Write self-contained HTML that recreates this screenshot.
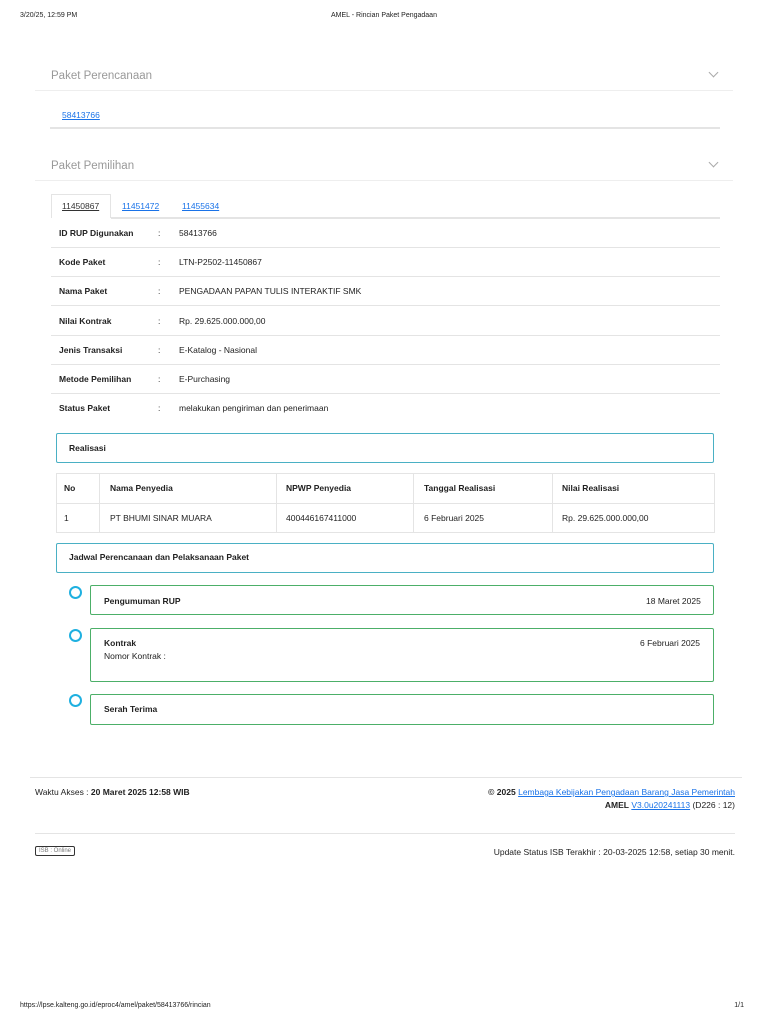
<!DOCTYPE html>
<html><head><meta charset="utf-8"><style>
*{margin:0;padding:0;box-sizing:border-box}
body{width:768px;height:1024px;background:#fff;font-family:"Liberation Sans",sans-serif;font-size:8.5px;color:#222;position:relative;overflow:hidden}
.a{position:absolute;white-space:nowrap}
.hl{position:absolute;height:1px;background:#e4e4e4}
a{color:#1a73e8;text-decoration:underline}
.b{font-weight:bold}
.box{position:absolute;border:1px solid #4ab0c4;border-radius:2px}
.gbox{position:absolute;border:1px solid #4caf68;border-radius:2px}
.circ{position:absolute;width:13px;height:13px;border:2px solid #1fb0e0;border-radius:50%}
.chev{position:absolute;width:7px;height:7px;border-right:1px solid #aaa;border-bottom:1px solid #aaa;transform:rotate(45deg)}
</style></head><body>
<div class="a" style="left:20px;top:12px;font-size:7px">3/20/25, 12:59 PM</div>
<div class="a" style="left:0;width:768px;text-align:center;top:12px;font-size:7px">AMEL - Rincian Paket Pengadaan</div>

<div class="a" style="left:51px;top:70px;font-size:11.5px;color:#999">Paket Perencanaan</div>
<div class="chev" style="left:710px;top:69px"></div>
<div class="hl" style="left:35px;width:698px;top:90px;background:#eee"></div>
<div class="a" style="left:62px;top:110px"><a>58413766</a></div>
<div class="hl" style="left:50px;width:670px;top:127px;height:1.5px"></div>

<div class="a" style="left:51px;top:160px;font-size:11.5px;color:#999">Paket Pemilihan</div>
<div class="chev" style="left:710px;top:159px"></div>
<div class="hl" style="left:35px;width:698px;top:180px;background:#eee"></div>

<div style="position:absolute;left:51px;top:194px;width:60px;height:24px;border:1px solid #e4e4e4;border-bottom:none;background:#fff"></div>
<div class="a" style="left:62px;top:201px;color:#333;text-decoration:underline">11450867</div>
<div class="a" style="left:122px;top:201px"><a>11451472</a></div>
<div class="a" style="left:182px;top:201px"><a>11455634</a></div>
<div class="hl" style="left:111px;width:609px;top:217px;height:1.5px"></div>

<div class="a b" style="left:59px;top:228px">ID RUP Digunakan</div><div class="a" style="left:158px;top:228px">:</div><div class="a" style="left:179px;top:228px">58413766</div>
<div class="hl" style="left:51px;width:669px;top:247px"></div>
<div class="a b" style="left:59px;top:257px">Kode Paket</div><div class="a" style="left:158px;top:257px">:</div><div class="a" style="left:179px;top:257px">LTN-P2502-11450867</div>
<div class="hl" style="left:51px;width:669px;top:276px"></div>
<div class="a b" style="left:59px;top:286px">Nama Paket</div><div class="a" style="left:158px;top:286px">:</div><div class="a" style="left:179px;top:286px">PENGADAAN PAPAN TULIS INTERAKTIF SMK</div>
<div class="hl" style="left:51px;width:669px;top:305px"></div>
<div class="a b" style="left:59px;top:316px">Nilai Kontrak</div><div class="a" style="left:158px;top:316px">:</div><div class="a" style="left:179px;top:316px">Rp. 29.625.000.000,00</div>
<div class="hl" style="left:51px;width:669px;top:335px"></div>
<div class="a b" style="left:59px;top:345px">Jenis Transaksi</div><div class="a" style="left:158px;top:345px">:</div><div class="a" style="left:179px;top:345px">E-Katalog - Nasional</div>
<div class="hl" style="left:51px;width:669px;top:364px"></div>
<div class="a b" style="left:59px;top:374px">Metode Pemilihan</div><div class="a" style="left:158px;top:374px">:</div><div class="a" style="left:179px;top:374px">E-Purchasing</div>
<div class="hl" style="left:51px;width:669px;top:393px"></div>
<div class="a b" style="left:59px;top:403px">Status Paket</div><div class="a" style="left:158px;top:403px">:</div><div class="a" style="left:179px;top:403px">melakukan pengiriman dan penerimaan</div>

<div class="box" style="left:56px;top:433px;width:658px;height:30px"></div>
<div class="a b" style="left:69px;top:443px">Realisasi</div>

<div style="position:absolute;left:56px;top:473px;width:659px;height:60px;border:1px solid #e4e4e4"></div>
<div class="hl" style="left:56px;width:659px;top:503px"></div>
<div style="position:absolute;left:99px;top:473px;width:1px;height:60px;background:#e4e4e4"></div>
<div style="position:absolute;left:276px;top:473px;width:1px;height:60px;background:#e4e4e4"></div>
<div style="position:absolute;left:413px;top:473px;width:1px;height:60px;background:#e4e4e4"></div>
<div style="position:absolute;left:552px;top:473px;width:1px;height:60px;background:#e4e4e4"></div>
<div class="a b" style="left:64px;top:483px">No</div>
<div class="a b" style="left:110px;top:483px">Nama Penyedia</div>
<div class="a b" style="left:286px;top:483px">NPWP Penyedia</div>
<div class="a b" style="left:424px;top:483px">Tanggal Realisasi</div>
<div class="a b" style="left:562px;top:483px">Nilai Realisasi</div>
<div class="a" style="left:64px;top:513px">1</div>
<div class="a" style="left:110px;top:513px">PT BHUMI SINAR MUARA</div>
<div class="a" style="left:286px;top:513px">400446167411000</div>
<div class="a" style="left:424px;top:513px">6 Februari 2025</div>
<div class="a" style="left:562px;top:513px">Rp. 29.625.000.000,00</div>

<div class="box" style="left:56px;top:543px;width:658px;height:30px"></div>
<div class="a b" style="left:69px;top:552px">Jadwal Perencanaan dan Pelaksanaan Paket</div>

<div class="circ" style="left:69px;top:586px"></div>
<div class="gbox" style="left:90px;top:585px;width:624px;height:30px"></div>
<div class="a b" style="left:104px;top:596px">Pengumuman RUP</div>
<div class="a" style="left:646px;top:596px">18 Maret 2025</div>

<div class="circ" style="left:69px;top:629px"></div>
<div class="gbox" style="left:90px;top:628px;width:624px;height:54px"></div>
<div class="a b" style="left:104px;top:638px">Kontrak</div>
<div class="a" style="left:104px;top:651px">Nomor Kontrak :</div>
<div class="a" style="left:640px;top:638px">6 Februari 2025</div>

<div class="circ" style="left:69px;top:694px"></div>
<div class="gbox" style="left:90px;top:694px;width:624px;height:31px"></div>
<div class="a b" style="left:104px;top:704px">Serah Terima</div>

<div class="hl" style="left:30px;width:712px;top:777px"></div>
<div class="a" style="left:35px;top:787px">Waktu Akses : <b>20 Maret 2025 12:58 WIB</b></div>
<div class="a" style="right:33px;top:787px"><b>© 2025</b> <a>Lembaga Kebijakan Pengadaan Barang Jasa Pemerintah</a></div>
<div class="a" style="right:33px;top:800px"><b>AMEL</b> <a>V3.0u20241113</a> (D226 : 12)</div>
<div class="hl" style="left:35px;width:700px;top:833px"></div>
<div class="a" style="left:35px;top:846px;border:1px solid #333;border-radius:2px;font-size:6px;color:#777;padding:1px 3px">ISB : Online</div>
<div class="a" style="right:33px;top:847px">Update Status ISB Terakhir : 20-03-2025 12:58, setiap 30 menit.</div>

<div class="a" style="left:20px;top:1002px;font-size:7px">https://lpse.kalteng.go.id/eproc4/amel/paket/58413766/rincian</div>
<div class="a" style="right:24px;top:1002px;font-size:7px">1/1</div>
</body></html>
